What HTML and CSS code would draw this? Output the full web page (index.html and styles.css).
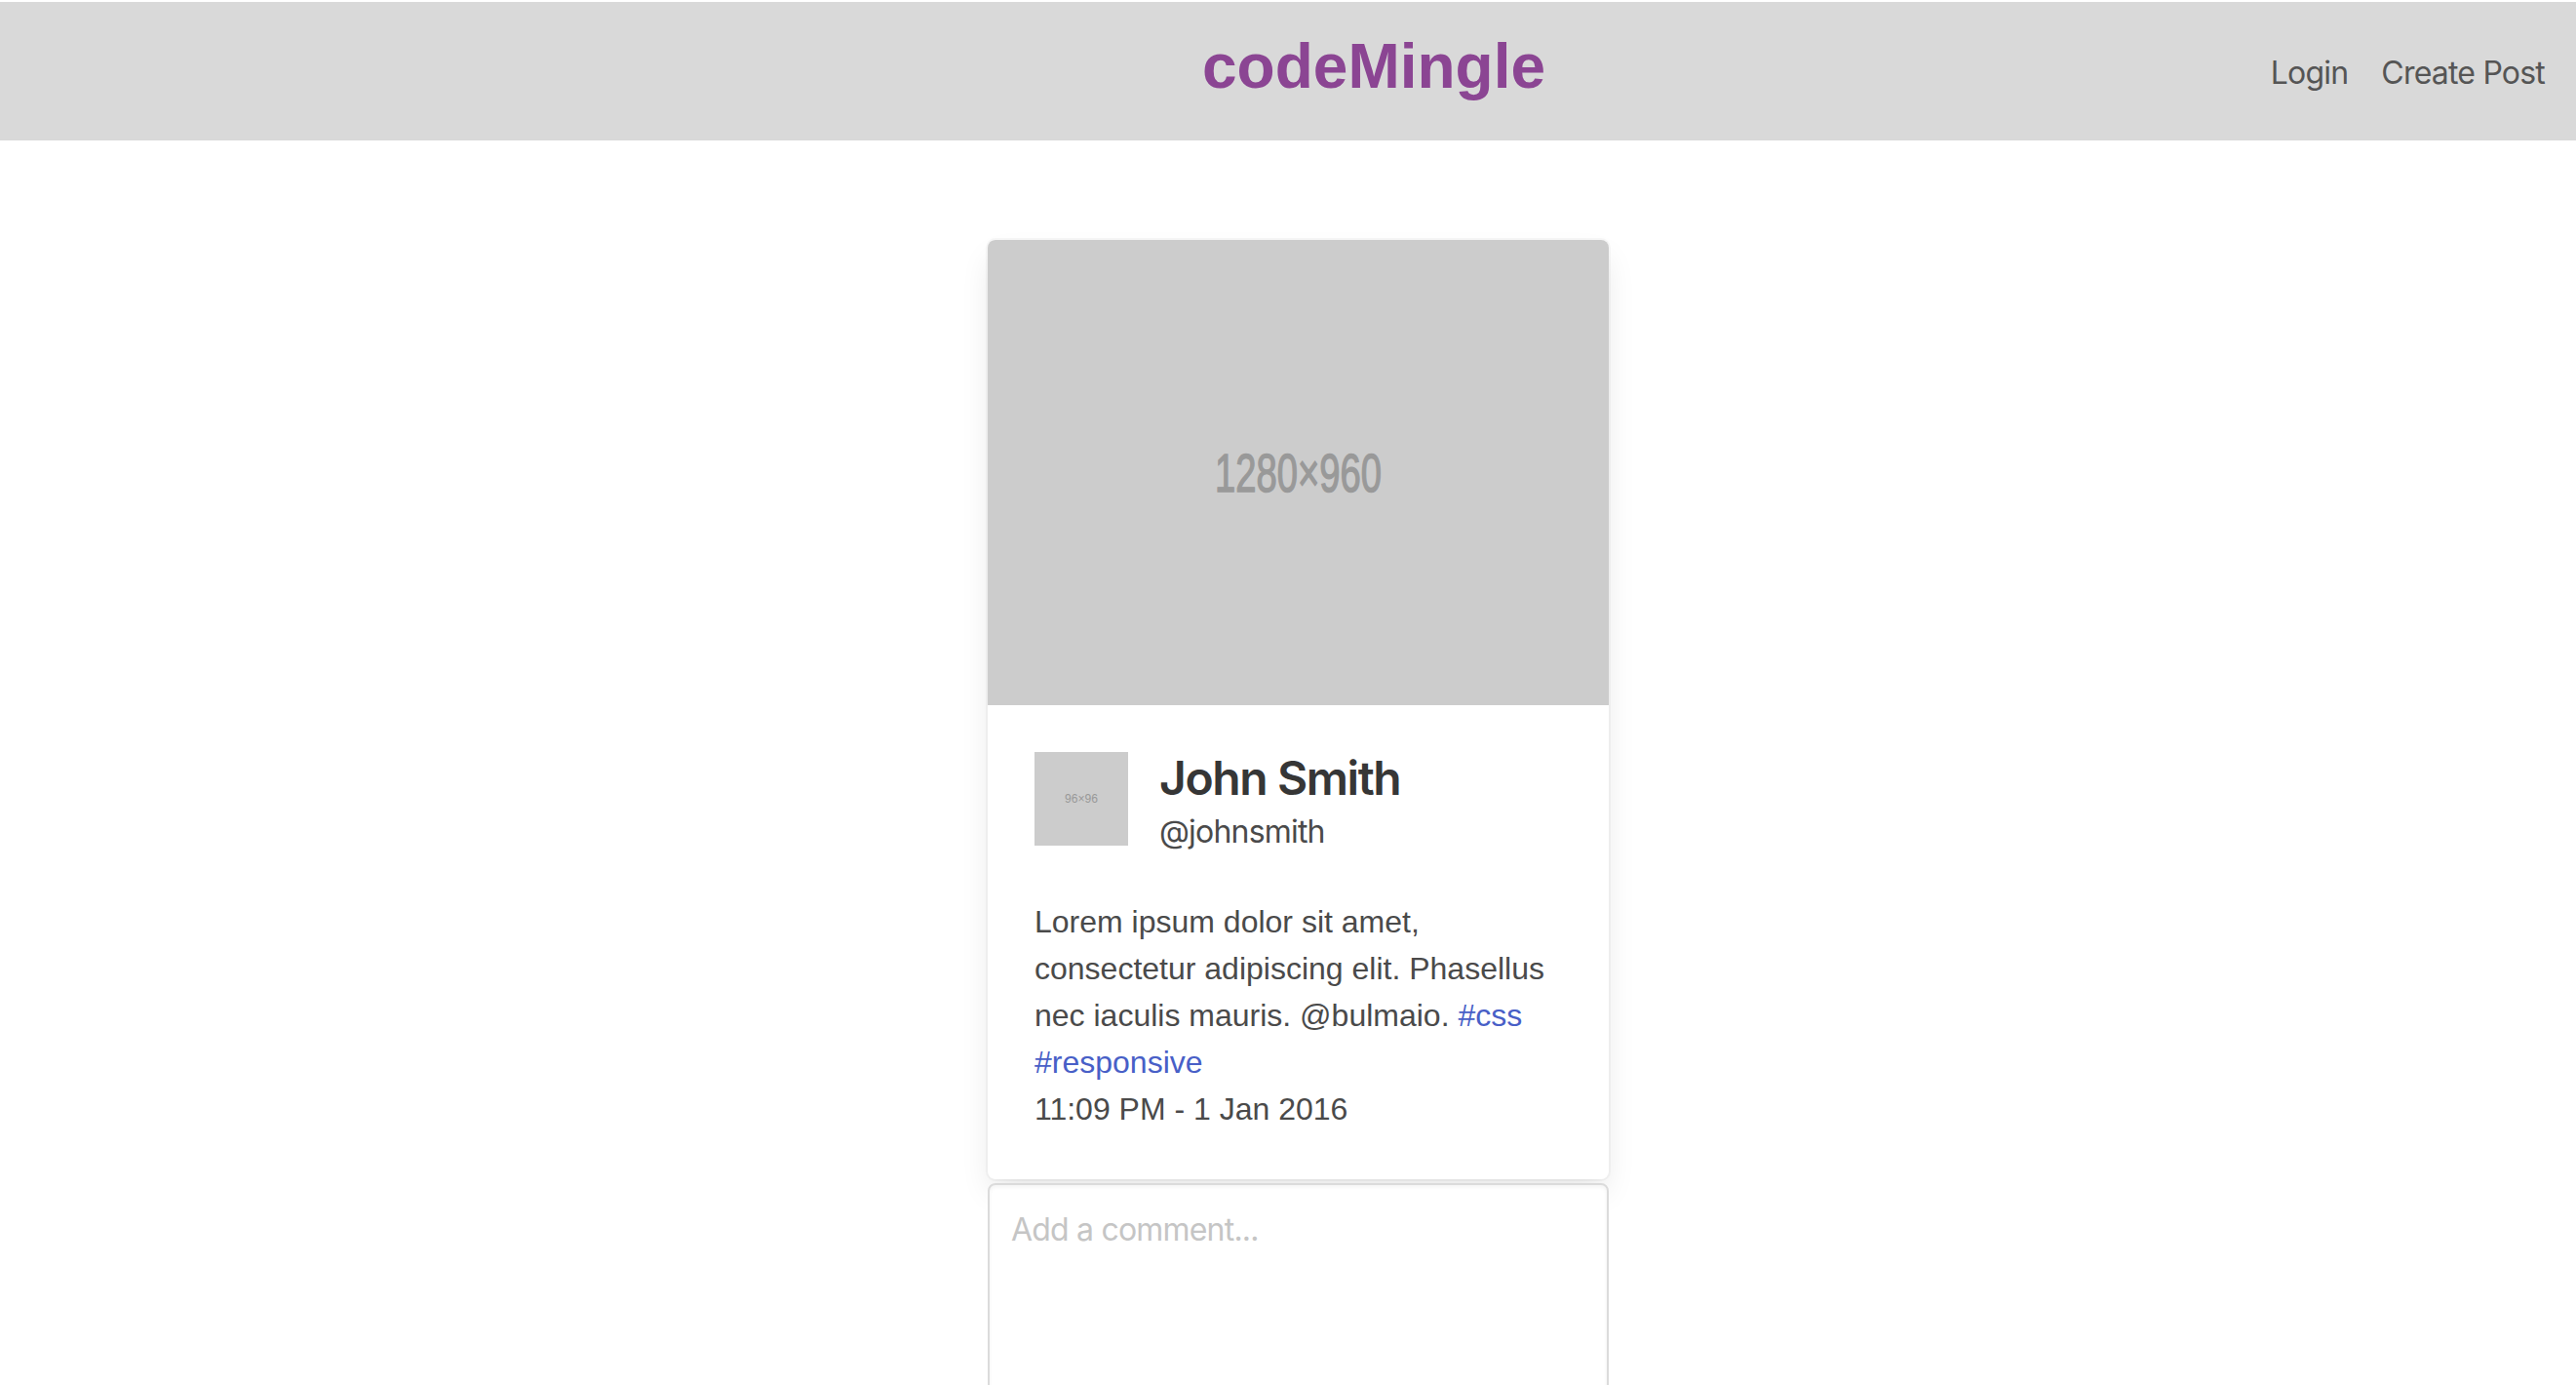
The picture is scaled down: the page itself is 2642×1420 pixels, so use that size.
FILE: index.html
```html
<!DOCTYPE html>
<html lang="en">
<head>
<meta charset="utf-8">
<title>codeMingle</title>
<link rel="stylesheet" href="styles.css">
</head>
<body>
<header class="navbar">
  <a class="brand" href="#">codeMingle</a>
  <nav class="nav-menu">
    <a class="nav-item" href="#">Login</a>
    <a class="nav-item" href="#">Create Post</a>
  </nav>
</header>
<main class="section">
  <div class="column">
    <div class="card">
      <div class="card-image">
        <svg class="placeholder" width="637" height="478" viewBox="0 0 637 478">
          <rect width="637" height="478" fill="#cccccc"/>
          <text x="318.5" y="258" text-anchor="middle" font-family="Liberation Sans Narrow, Liberation Sans, sans-serif" font-size="56" fill="#999999" stroke="#999999" stroke-width="1.4" textLength="171" lengthAdjust="spacingAndGlyphs">1280×960</text>
        </svg>
      </div>
      <div class="card-content">
        <div class="media">
          <div class="media-left">
            <svg class="avatar" width="96" height="96" viewBox="0 0 96 96">
              <rect width="96" height="96" fill="#cccccc"/>
              <text x="48" y="52" text-anchor="middle" font-family="Liberation Sans Narrow, Liberation Sans, sans-serif" font-size="12" fill="#999999" textLength="34" lengthAdjust="spacingAndGlyphs">96×96</text>
            </svg>
          </div>
          <div class="media-content">
            <p class="title">John Smith</p>
            <p class="subtitle">@johnsmith</p>
          </div>
        </div>
        <div class="content">
          Lorem ipsum dolor sit amet, consectetur adipiscing elit. Phasellus nec iaculis mauris. @bulmaio. <a href="#">#css</a> <a href="#">#responsive</a><br>
          <time>11:09 PM - 1 Jan 2016</time>
        </div>
      </div>
    </div>
    <textarea class="comment" placeholder="Add a comment..."></textarea>
  </div>
</main>
</body>
</html>
```

FILE: styles.css
```css
html, body {
  margin: 0;
  padding: 0;
  background: #ffffff;
}

body {
  font-family: Inter, "Noto Sans", sans-serif;
  color: #4a4a4a;
}

a {
  text-decoration: none;
}

.navbar {
  margin-top: 2px;
  height: 142px;
  box-sizing: border-box;
  background: #d9d9d9;
  display: flex;
  align-items: flex-start;
  padding: 34px 32px 0 1233px;
}

.brand {
  font-family: "Liberation Sans", Arial, sans-serif;
  font-weight: 700;
  font-size: 64px;
  line-height: 64px;
  color: #8b4593;
}

.nav-menu {
  margin-left: auto;
  margin-top: 19px;
  display: flex;
  gap: 34px;
}

.nav-item {
  font-family: Inter, "Noto Sans", sans-serif;
  font-size: 32px;
  letter-spacing: -0.8px;
  color: #555555;
  line-height: normal;
}

.section {
  padding-top: 102px;
  display: flex;
  justify-content: center;
  padding-left: 21px;
}

.column {
  width: 637px;
  display: flex;
  flex-direction: column;
  gap: 4px;
}

.card {
  background: #ffffff;
  border-radius: 8px;
  box-shadow: 0 16px 32px -4px rgba(10, 10, 10, 0.1), 0 0 0 2px rgba(10, 10, 10, 0.03);
}

.card-image {
  border-radius: 8px 8px 0 0;
  overflow: hidden;
  height: 477px;
}

.placeholder,
.avatar {
  display: block;
}

.card-content {
  padding: 48px;
}

.media {
  display: flex;
  align-items: flex-start;
  margin-bottom: 48px;
}

.media-left {
  margin-right: 32px;
  flex-shrink: 0;
}

.media-content {
  flex: 1;
}

.title {
  margin: 0;
  font-family: Inter, "Noto Sans", sans-serif;
  font-size: 48px;
  font-weight: 600;
  letter-spacing: -1.4px;
  line-height: 54px;
  color: #363636;
}

.subtitle {
  margin: 8px 0 0;
  font-family: Inter, "Noto Sans", sans-serif;
  font-size: 32px;
  letter-spacing: -0.8px;
  line-height: 40px;
  color: #4a4a4a;
}

.content {
  font-family: "Liberation Sans", Arial, sans-serif;
  font-size: 32px;
  line-height: 48px;
  color: #4a4a4a;
}

.content a {
  color: #485fc7;
}

.comment {
  display: block;
  box-sizing: border-box;
  width: 637px;
  height: 320px;
  margin: 0;
  padding: 22px;
  border: 2px solid #dbdbdb;
  border-radius: 8px;
  box-shadow: inset 0 2px 4px rgba(10, 10, 10, 0.05);
  font-family: Inter, "Noto Sans", sans-serif;
  font-size: 32px;
  letter-spacing: -0.8px;
  line-height: 48px;
  color: #363636;
  resize: vertical;
  background: #ffffff;
}

.comment::placeholder {
  color: #c5c5c5;
}
```
